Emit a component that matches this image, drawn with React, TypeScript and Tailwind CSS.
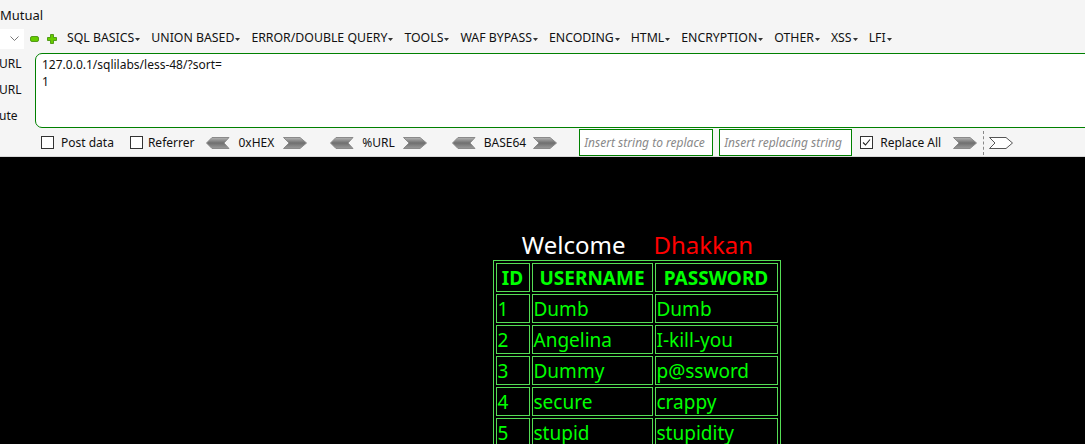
import React from 'react'

const menus = ['SQL BASICS', 'UNION BASED', 'ERROR/DOUBLE QUERY', 'TOOLS', 'WAF BYPASS', 'ENCODING', 'HTML', 'ENCRYPTION', 'OTHER', 'XSS', 'LFI']

const rows = [
  ['1', 'Dumb', 'Dumb'],
  ['2', 'Angelina', 'I-kill-you'],
  ['3', 'Dummy', 'p@ssword'],
  ['4', 'secure', 'crappy'],
  ['5', 'stupid', 'stupidity'],
]

const Caret = () => (
  <svg width="5" height="3" viewBox="0 0 5 3" className="ml-[1px] mt-[2px]">
    <path d="M0 0 L5 0 L2.5 3 Z" fill="#333" />
  </svg>
)

const Arrow = ({ dir, hollow }: { dir: 'left' | 'right'; hollow?: boolean }) => {
  const pts = dir === 'left' ? '6,0.5 23,0.5 18,6 23,11.5 6,11.5 0.5,6' : '0.5,0.5 17,0.5 23.5,6 17,11.5 0.5,11.5 6,6'
  const id = `g-${dir}-${hollow ? 'h' : 'f'}`
  return (
    <svg width="24" height="12" viewBox="0 0 24 12" className="block">
      <defs>
        <linearGradient id={id} x1="0" y1="0" x2="0" y2="1">
          <stop offset="0" stopColor={hollow ? '#ffffff' : '#b5b5b5'} />
          <stop offset="0.5" stopColor={hollow ? '#ffffff' : '#6f6f6f'} />
          <stop offset="1" stopColor={hollow ? '#ffffff' : '#9a9a9a'} />
        </linearGradient>
      </defs>
      <polygon points={pts} fill={`url(#${id})`} stroke={hollow ? '#555' : '#8a8a8a'} strokeWidth="1" />
    </svg>
  )
}

const Check = ({ checked }: { checked?: boolean }) => (
  <span className="w-[13px] h-[13px] border border-[#333] bg-white flex items-center justify-center">
    {checked && (
      <svg width="9" height="9" viewBox="0 0 9 9">
        <path d="M1 4.5 L3.5 7 L8 1.5" fill="none" stroke="#222" strokeWidth="1.1" />
      </svg>
    )}
  </span>
)

export default function App() {
  return (
    <div className="w-[1085px] h-[444px] overflow-hidden bg-black" style={{ fontFamily: '"Noto Sans", "Open Sans", sans-serif' }}>
      {/* toolbar panel */}
      <div className="bg-[#f5f5f5] h-[157px] border-b border-[#d8d8d8] text-[#111] overflow-hidden">
        <div className="h-[28px] flex items-center text-[13px] pt-[4px]">Mutual</div>

        <div className="h-[21px] flex items-center text-[12.3px]">
          <div className="w-[24px] h-[20px] bg-white flex items-center justify-end pr-[5px]">
            <svg width="9" height="6" viewBox="0 0 9 6"><path d="M0.5 0.5 L4.5 4.5 L8.5 0.5" fill="none" stroke="#777" strokeWidth="1" /></svg>
          </div>
          <svg width="9" height="6" viewBox="0 0 9 6" className="ml-[6px]">
            <rect x="0.5" y="0.5" width="8" height="5" rx="1.5" fill="#66cc00" stroke="#3c8a00" strokeWidth="0.8" />
          </svg>
          <svg width="10" height="10" viewBox="0 0 10 10" className="ml-[8px]">
            <path d="M3.5 0.5 H6.5 V3.5 H9.5 V6.5 H6.5 V9.5 H3.5 V6.5 H0.5 V3.5 H3.5 Z" fill="#66cc00" stroke="#3c8a00" strokeWidth="0.8" />
          </svg>
          <div className="flex items-center gap-[11px] ml-[10px]">
            {menus.map(m => (
              <span key={m} className="flex items-center whitespace-nowrap">
                {m}
                <Caret />
              </span>
            ))}
          </div>
        </div>

        <div className="flex mt-[4px]">
          <div className="w-[36px] shrink-0 flex flex-col text-[12px] leading-none pt-[5px] gap-[14px] -ml-[1px]">
            <span>URL</span>
            <span>URL</span>
            <span>ute</span>
          </div>
          <div className="flex-1 h-[75px] bg-white border border-[#008000] rounded-l-[7px] -mr-[12px] px-[6px] pt-[2px] text-[12px] leading-[17px]">
            <div>127.0.0.1/sqlilabs/less-48/?sort=</div>
            <div>1</div>
          </div>
        </div>

        <div className="h-[29px] flex items-center text-[12px] pl-[41px]">
          <Check />
          <span className="ml-[7px]">Post data</span>
          <span className="ml-[16px]"><Check /></span>
          <span className="ml-[5px]">Referrer</span>
          <span className="ml-[12px]"><Arrow dir="left" /></span>
          <span className="ml-[8px]">0xHEX</span>
          <span className="ml-[9px]"><Arrow dir="right" /></span>
          <span className="ml-[23px]"><Arrow dir="left" /></span>
          <span className="ml-[8px]">%URL</span>
          <span className="ml-[8px]"><Arrow dir="right" /></span>
          <span className="ml-[25px]"><Arrow dir="left" /></span>
          <span className="ml-[8px]">BASE64</span>
          <span className="ml-[7px]"><Arrow dir="right" /></span>
          <div className="ml-[22px] w-[134px] h-[27px] bg-white border border-[#008000] flex items-center px-[4px] overflow-hidden">
            <span className="italic text-[#888] whitespace-nowrap">Insert string to replace</span>
          </div>
          <div className="ml-[6px] w-[133px] h-[27px] bg-white border border-[#008000] flex items-center px-[4px] overflow-hidden">
            <span className="italic text-[#888] whitespace-nowrap">Insert replacing string</span>
          </div>
          <span className="ml-[8px]"><Check checked /></span>
          <span className="ml-[7px]">Replace All</span>
          <span className="ml-[12px]"><Arrow dir="right" /></span>
          <span className="ml-[6px] h-[24px] border-l border-dashed border-[#888]" />
          <span className="ml-[5px]"><Arrow dir="right" hollow /></span>
        </div>
      </div>

      {/* page content */}
      <div className="flex flex-col items-center pt-[73px] pl-[190px]">
        <div className="flex items-center gap-[28px] text-[24px] leading-[30px]">
          <span className="text-white">Welcome</span>
          <span className="text-[#ff0000]">Dhakkan</span>
        </div>
        <table className="-ml-[2px] border border-[#55dd55] border-separate border-spacing-[2px] text-[#00ff00] text-[19px]">
          <thead>
            <tr className="h-[29px]">
              <th className="border border-[#55dd55] w-[34px] px-[2px] pt-[2px] pb-0 font-bold leading-[25px]">ID</th>
              <th className="border border-[#55dd55] w-[121px] px-[2px] pt-[2px] pb-0 font-bold leading-[25px]">USERNAME</th>
              <th className="border border-[#55dd55] w-[123px] px-[2px] pt-[2px] pb-0 font-bold leading-[25px]">PASSWORD</th>
            </tr>
          </thead>
          <tbody>
            {rows.map(r => (
              <tr key={r[0]} className="h-[29px]">
                {r.map((c, i) => (
                  <td key={i} className="border border-[#55dd55] px-[1px] pt-[2px] pb-0 leading-[25px]">{c}</td>
                ))}
              </tr>
            ))}
          </tbody>
        </table>
      </div>
    </div>
  )
}
